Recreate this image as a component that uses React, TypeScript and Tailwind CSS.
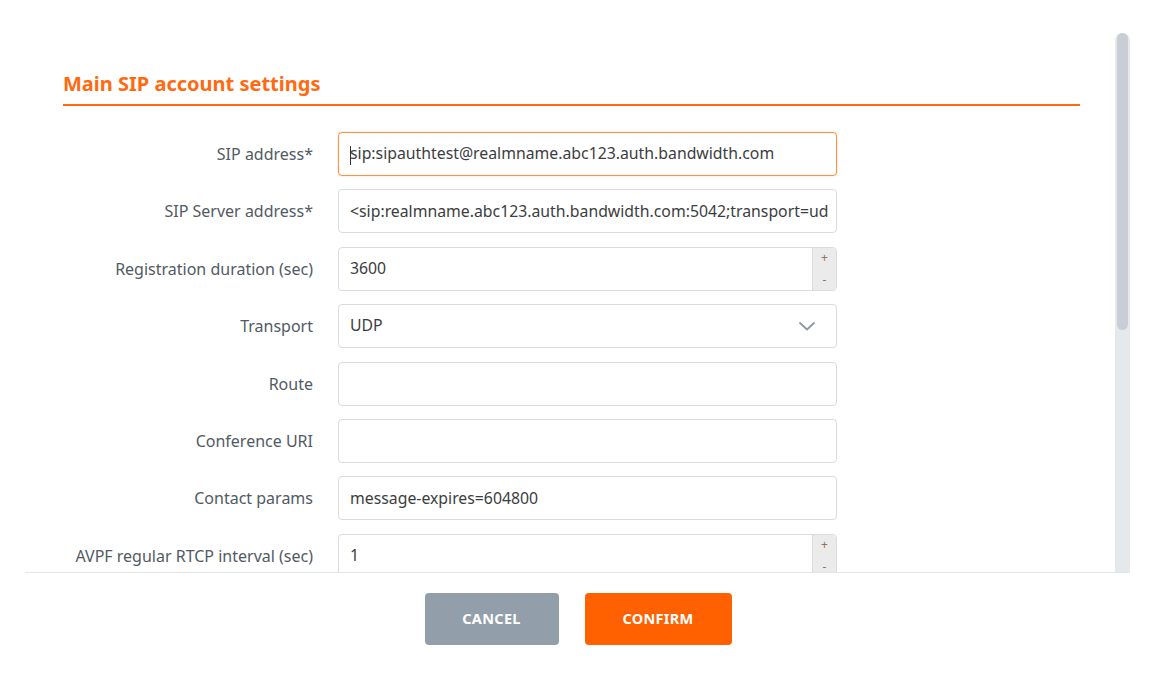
const fields = [
    { label: "SIP address*", value: "sip:sipauthtest@realmname.abc123.auth.bandwidth.com", kind: "focused" },
    { label: "SIP Server address*", value: "<sip:realmname.abc123.auth.bandwidth.com:5042;transport=udp>", kind: "text" },
    { label: "Registration duration (sec)", value: "3600", kind: "number" },
    { label: "Transport", value: "UDP", kind: "select" },
    { label: "Route", value: "", kind: "text" },
    { label: "Conference URI", value: "", kind: "text" },
    { label: "Contact params", value: "message-expires=604800", kind: "text" },
    { label: "AVPF regular RTCP interval (sec)", value: "1", kind: "number" },
];

const Field = ({ value, kind }: { value: string; kind: string }) => {
    const border =
        kind === "focused"
            ? "border-[#ff8f45] shadow-[0_0_2px_rgba(255,120,40,0.35)]"
            : "border-[#d9dcdf]";
    return (
        <div className={`ml-[25px] w-[499px] h-[44px] shrink-0 flex items-stretch rounded-[4px] border bg-white overflow-hidden ${border}`}>
            <div className="flex-1 min-w-0 mr-[8px] flex items-center pl-[11px] text-[15.8px] text-[#3b3d40] whitespace-nowrap overflow-hidden relative">
                {kind === "focused" && <span className="absolute left-[11px] top-[13px] w-px h-[19px] bg-[#333]" />}
                {value}
            </div>
            {kind === "number" && (
                <div className="w-[24px] -ml-[8px] border-l border-[#d9dcdf] bg-[#ebebeb] flex flex-col items-center justify-between py-[2px] text-[12px] leading-[16px] text-[#8f7462]">
                    <span>+</span>
                    <span>-</span>
                </div>
            )}
            {kind === "select" && (
                <div className="w-[37px] flex items-center justify-start">
                    <svg width="16" height="9" viewBox="0 0 16 9" fill="none">
                        <polyline points="1,1 8,7.5 15,1" stroke="#8b98a6" strokeWidth="1.8" strokeLinecap="round" strokeLinejoin="round" />
                    </svg>
                </div>
            )}
        </div>
    );
};

export default function App() {
    return (
        <div className="w-[1156px] h-[676px] bg-white font-['Noto_Sans',sans-serif]">
            <div className="ml-[25px] w-[1105px] h-[573px] border-b border-[#e4e6e9] flex">
                <div className="flex-1 overflow-hidden pl-[38px] pr-[35px]">
                    <h2 className="pt-[70px] pb-[6px] text-[20px] leading-[28px] font-bold text-[#ff6a10] border-b-2 border-[#ff6a10]">
                        Main SIP account settings
                    </h2>
                    <div className="mt-[26px] flex flex-col gap-[13.4px]">
                        {fields.map(({ label, value, kind }, index) => (
                            <div key={index} className="flex items-center">
                                <div className="w-[250px] shrink-0 text-right text-[16px] text-[#525a63] whitespace-nowrap">{label}</div>
                                <Field value={value} kind={kind} />
                            </div>
                        ))}
                    </div>
                </div>
                <div className="w-[15px] mt-[33px] bg-[#e6e9ec] rounded-t-full flex justify-center">
                    <div className="w-[11px] h-[297px] rounded-full bg-[#c9ced6]" />
                </div>
            </div>
            <div className="flex justify-center gap-[26px] pt-[20px]">
                <button className="w-[134px] h-[52px] rounded-[4px] bg-[#929fab] text-white text-[14.5px] font-bold tracking-[0.3px]">
                    CANCEL
                </button>
                <button className="w-[147px] h-[52px] rounded-[4px] bg-[#ff6000] text-white text-[14.5px] font-bold tracking-[0.3px]">
                    CONFIRM
                </button>
            </div>
        </div>
    );
}
